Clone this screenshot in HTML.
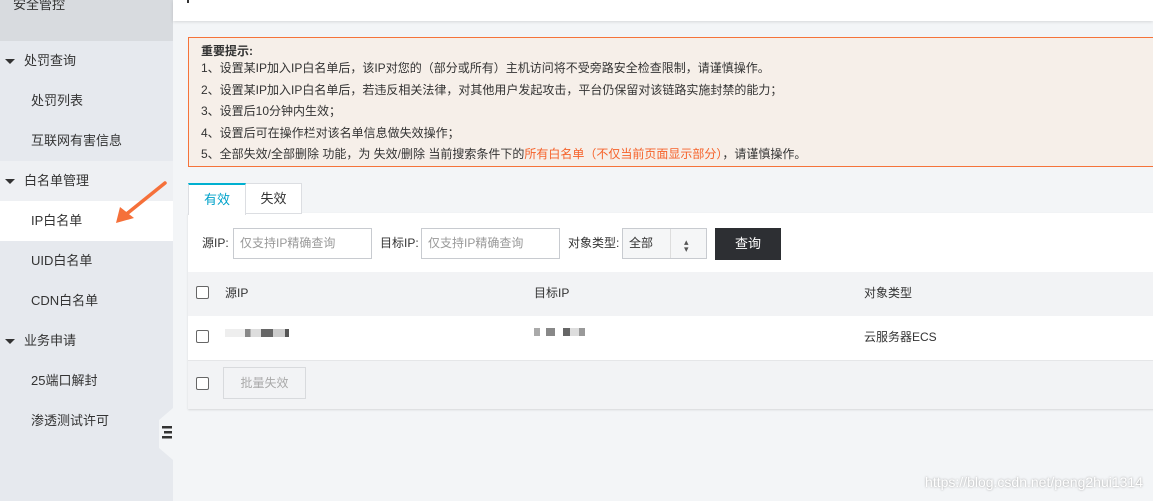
<!DOCTYPE html>
<html><head><meta charset="utf-8"><style>
*{margin:0;padding:0;box-sizing:border-box}
body{width:1153px;height:501px;overflow:hidden;background:#f3f5f7;font-family:"Liberation Sans","Noto Sans CJK SC",sans-serif;font-size:12px;color:#333;position:relative}
.sb{position:absolute;left:0;top:0;width:173px;height:501px;background:#e6e9ee}
.sbtop{height:41px;background:#d8dbdf;padding:0 0 0 13px;line-height:10px;font-size:13px;color:#333}
.grp{height:40px;line-height:40px;padding-left:24px;font-size:13px;position:relative}
.grp:before{content:"";position:absolute;left:5px;top:18px;border-left:5px solid transparent;border-right:5px solid transparent;border-top:5px solid #333}
.it{height:40px;line-height:40px;padding-left:31px;font-size:13px;color:#333}
.act{background:#fff}
.hdr{position:absolute;left:173px;top:0;width:980px;height:21px;background:#fff;box-shadow:0 1px 3px rgba(0,0,0,.12)}
.note{position:absolute;left:188px;top:37px;width:970px;height:130px;background:#f6efe9;border:1px solid #f5733a;padding:6px 12px;font-size:12px;line-height:21.5px;color:#333}
.note b{font-weight:bold;display:block;line-height:14px}
.or{color:#f5622a}
.tab{position:absolute;top:183px;height:31px;line-height:30px;text-align:center;font-size:13px;border:1px solid #dcdee2;background:#fff}
.panel{position:absolute;left:188px;top:213px;width:970px;height:196px;background:#fff;box-shadow:0 1px 2px rgba(0,0,0,.12)}
.inp{position:absolute;top:15px;height:31px;border:1px solid #c8cbd0;color:#999;padding-left:6px;line-height:29px;font-size:12px}
.lbl{position:absolute;top:15px;line-height:31px;font-size:12px}
.cb{position:absolute;width:13px;height:13px;border:1px solid #666;border-radius:2px;background:#fff}
</style></head><body>
<div class="sb">
<div class="sbtop">安全管控</div>
<div class="grp">处罚查询</div>
<div class="it">处罚列表</div>
<div class="it">互联网有害信息</div>
<div class="grp" style="background:#eef0f3">白名单管理</div>
<div class="it act">IP白名单</div>
<div class="it">UID白名单</div>
<div class="it">CDN白名单</div>
<div class="grp">业务申请</div>
<div class="it">25端口解封</div>
<div class="it">渗透测试许可</div>
</div>
<svg style="position:absolute;left:108px;top:180px" width="60" height="46"><line x1="57" y1="3" x2="16" y2="36" stroke="#f5703a" stroke-width="3.5" stroke-linecap="round"/><polygon points="8,43 12,27 26,38" fill="#f5703a"/></svg>
<svg style="position:absolute;left:159px;top:408px" width="15" height="52"><polygon points="14,0 14,52 0,40 0,12" fill="#f3f5f7"/><rect x="3" y="18" width="10" height="2.5" fill="#333"/><rect x="5" y="23" width="8" height="2.5" fill="#333"/><rect x="3" y="28" width="10" height="2.5" fill="#333"/></svg>
<div class="hdr"><div style="position:absolute;left:14px;top:0;width:2px;height:3px;background:#333"></div></div>
<div class="note"><b>重要提示:</b>
1、设置某IP加入IP白名单后，该IP对您的（部分或所有）主机访问将不受旁路安全检查限制，请谨慎操作。<br>
2、设置某IP加入IP白名单后，若违反相关法律，对其他用户发起攻击，平台仍保留对该链路实施封禁的能力；<br>
3、设置后10分钟内生效；<br>
4、设置后可在操作栏对该名单信息做失效操作；<br>
5、全部失效/全部删除 功能，为 失效/删除 当前搜索条件下的<span class="or">所有白名单（不仅当前页面显示部分）</span>，请谨慎操作。</div>
<div class="panel">
<div class="lbl" style="left:14px">源IP:</div>
<div class="inp" style="left:45px;width:139px">仅支持IP精确查询</div>
<div class="lbl" style="left:192px">目标IP:</div>
<div class="inp" style="left:233px;width:139px">仅支持IP精确查询</div>
<div class="lbl" style="left:380px">对象类型:</div>
<div class="inp" style="left:434px;width:85px;background:#f5f6f7;color:#333">全部<span style="position:absolute;left:47px;top:0;height:29px;border-left:1px solid #ddd"></span><span style="position:absolute;left:61px;top:-1px;font-size:9px;color:#555">&#x25B4;</span><span style="position:absolute;left:61px;top:6px;font-size:9px;color:#555">&#x25BE;</span></div>
<div style="position:absolute;left:527px;top:15px;width:66px;height:32px;background:#2d2f33;color:#fff;text-align:center;line-height:32px;font-size:13px">查询</div>
<div style="position:absolute;left:0;top:59px;width:970px;height:44px;background:#f2f3f5"></div>
<div class="cb" style="left:8px;top:73px"></div>
<div style="position:absolute;left:37px;top:71px;font-size:12px">源IP</div>
<div style="position:absolute;left:346px;top:71px;font-size:12px">目标IP</div>
<div style="position:absolute;left:676px;top:71px;font-size:12px">对象类型</div>
<div class="cb" style="left:8px;top:117px"></div>
<div style="position:absolute;left:37px;top:116px;width:80px;height:8px;background:linear-gradient(90deg,#eee 0 25%,#888 25% 32%,#ddd 32% 45%,#666 45% 60%,#ccc 60% 75%,#555 75% 80%,#fff 80%)"></div>
<div style="position:absolute;left:346px;top:115px;width:60px;height:8px;background:linear-gradient(90deg,#aaa 0 10%,#fff 10% 20%,#888 20% 35%,#fff 35% 48%,#666 48% 60%,#ddd 60% 75%,#999 75% 85%,#fff 85%)"></div>
<div style="position:absolute;left:676px;top:115px;font-size:12px">云服务器ECS</div>
<div style="position:absolute;left:0;top:147px;width:970px;height:49px;background:#f2f3f5;border-top:1px solid #e5e6e8"></div>
<div class="cb" style="left:8px;top:164px"></div>
<div style="position:absolute;left:35px;top:154px;width:83px;height:32px;border:1px solid #d8dadd;color:#aaa;text-align:center;line-height:30px;font-size:12px">批量失效</div>
</div>
<div class="tab" style="left:188px;width:58px;color:#00a2ca;border-top:2px solid #00b0d0;border-bottom:none;height:32px;z-index:2">有效</div>
<div class="tab" style="left:245px;width:57px">失效</div>
<div style="position:absolute;right:10px;top:474px;font-size:14px;color:#fff;text-shadow:0 0 2px #999">https://blog.csdn.net/peng2hui1314</div>
</body></html>
